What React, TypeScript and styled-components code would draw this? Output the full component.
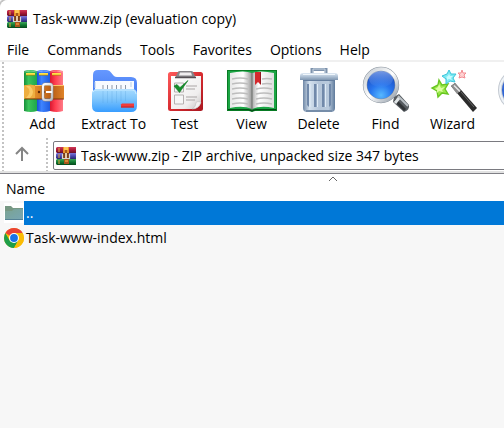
import React from "react";
import styled, { createGlobalStyle } from "styled-components";

const GlobalStyle = createGlobalStyle`
  * { box-sizing: border-box; }
  body {
    margin: 0;
    background: #f7f7f7;
    color: #000;
    font-family: "Open Sans", "Noto Sans", sans-serif;
    font-size: 14px;
    line-height: 20px;
  }
  button, input { font: inherit; color: inherit; }
`;

const Window = styled.div`
  min-height: 100vh;
  overflow: hidden;
  border-top-left-radius: 8px;
  box-shadow: 0 0 0 2px #c4c4c4;
  background: #f7f7f7;
`;

const TitleBar = styled.header`
  display: flex;
  align-items: center;
  gap: 6px;
  height: 38px;
  padding-left: 7px;
  background: #fff;
`;

const Title = styled.h1`
  margin: 0;
  font-size: 14px;
  font-weight: 400;
  white-space: nowrap;
`;

const MenuBar = styled.nav`
  display: flex;
  gap: 18px;
  height: 24px;
  padding: 2px 7px 0;
  background: #fff;
  border-bottom: 2px solid #f0f0f0;
`;

const MenuButton = styled.button`
  padding: 0;
  border: 0;
  background: none;
`;

const Grip = styled.div`
  flex: none;
  width: 2px;
  background: repeating-linear-gradient(#c3c3c3 0 2px, transparent 2px 4px);
`;

const ToolBar = styled.div`
  display: flex;
  height: 76px;
  padding-left: 2px;
  background: #fff;
  overflow: hidden;
`;

const Tools = styled.div`
  display: flex;
  padding-left: 5px;
`;

const ToolButton = styled.button`
  flex: none;
  display: flex;
  flex-direction: column;
  align-items: center;
  min-width: 67px;
  padding: 4px 5px 0;
  border: 0;
  background: none;
  white-space: nowrap;
`;

const ToolIcon = styled.svg`
  flex: none;
  width: 52px;
  height: 48px;
`;

const AddressBar = styled.div`
  display: flex;
  height: 35px;
  padding-left: 2px;
  background: #fff;
  border-bottom: 2px solid #e2e2e2;
`;

const UpButton = styled.button`
  flex: none;
  display: flex;
  align-items: center;
  justify-content: center;
  width: 36px;
  margin-right: 6px;
  padding: 0 0 2px;
  border: 0;
  background: none;
`;

const AddressBox = styled.label`
  flex: 1;
  display: flex;
  align-items: center;
  gap: 5px;
  height: 29px;
  margin: 3px -2px 0 5px;
  padding-left: 2px;
  border: 1px solid #7a7a80;
  border-radius: 2px;
`;

const AddressInput = styled.input`
  flex: 1;
  min-width: 0;
  height: 24px;
  padding: 0;
  border: 0;
  outline: 0;
  background: none;
`;

const FileTable = styled.table`
  width: 666px;
  min-width: 100%;
  table-layout: fixed;
  border-collapse: collapse;
  border-top: 1px solid #7f7f85;
`;

const NameHeader = styled.th`
  position: relative;
  height: 27px;
  padding: 3px 6px 0;
  background: #fff;
  font-weight: 400;
  text-align: left;
`;

const SortMark = styled.svg`
  position: absolute;
  top: 2px;
  left: 50%;
  width: 10px;
  height: 6px;
  margin-left: -5px;
`;

const FileCell = styled.td`
  height: 25px;
  padding: 0;
  vertical-align: top;
`;

const FileEntry = styled.div`
  display: flex;
  align-items: center;
  height: 24px;
  padding-left: 4px;
`;

const FileName = styled.span<{ $selected?: boolean }>`
  flex: 1;
  padding-left: 2px;
  line-height: 24px;
  background: ${(p) => (p.$selected ? "#0078d7" : "transparent")};
  color: ${(p) => (p.$selected ? "#fff" : "#000")};
`;

const SmallIcon = styled.svg`
  flex: none;
  width: 20px;
  height: 20px;
`;

const FolderTile = styled(SmallIcon)`
  background: #fff;
`;

function ArchiveIcon() {
  return (
    <SmallIcon viewBox="0 0 20 20" aria-hidden="true">
      <defs>
        <linearGradient id="arcR" x2="0" y2="1"><stop stopColor="#d03a58" /><stop offset=".5" stopColor="#a81838" /><stop offset="1" stopColor="#641028" /></linearGradient>
        <linearGradient id="arcB" x2="0" y2="1"><stop stopColor="#8078d8" /><stop offset=".5" stopColor="#4a48b0" /><stop offset="1" stopColor="#28286c" /></linearGradient>
        <linearGradient id="arcG" x2="0" y2="1"><stop stopColor="#3fa65a" /><stop offset=".5" stopColor="#117a32" /><stop offset="1" stopColor="#07481d" /></linearGradient>
      </defs>
      <path d="M1 1h19v6H1L0 6V2z" fill="url(#arcR)" />
      <path d="M1 7h19v6H1l-1-1V8z" fill="url(#arcB)" />
      <path d="M1 13h19v6H1l-1-1v-4z" fill="url(#arcG)" />
      <path d="M3 2v4M3 8v4M3 14v4" stroke="#e5a83c" />
      <path d="M7 1h6v6H7z" fill="#e8932c" />
      <path d="M8 1h4v3H8z" fill="#ffc552" />
      <path d="M9 4h2v3H9z" fill="#a85a18" />
      <path d="M7 7h6v6H7z" fill="#7c3d1a" />
      <path d="M6.5 8v4.5h7V8" fill="none" stroke="#d8d4d2" strokeWidth="1.2" />
      <path d="M10 7v5" stroke="#fff0c8" strokeWidth="1.6" />
      <path d="M8 13h5v5H8z" fill="#a9561d" />
      <path d="M9 14h3v2H9z" fill="#d98a34" />
    </SmallIcon>
  );
}

function AddIcon() {
  return (
    <ToolIcon viewBox="0 0 52 48" aria-hidden="true">
      <defs>
        <linearGradient id="addG"><stop stopColor="#168f3a" /><stop offset=".35" stopColor="#3bc45b" /><stop offset="1" stopColor="#1fa64b" /></linearGradient>
        <linearGradient id="addB"><stop stopColor="#174fd7" /><stop offset=".35" stopColor="#3e84ff" /><stop offset="1" stopColor="#205ce0" /></linearGradient>
        <linearGradient id="addR"><stop stopColor="#d91730" /><stop offset=".4" stopColor="#ff3d50" /><stop offset="1" stopColor="#ff7b87" /></linearGradient>
        <linearGradient id="addS"><stop stopColor="#f2a633" /><stop offset=".3" stopColor="#e08a28" /><stop offset=".7" stopColor="#b85c14" /><stop offset="1" stopColor="#df8429" /></linearGradient>
        <linearGradient id="addM" x2="1" y2="1"><stop stopColor="#fff" /><stop offset="1" stopColor="#b8b8bc" /></linearGradient>
      </defs>
      <path d="M7 5q6-2 13 0v40q-6 2-13 0z" fill="url(#addG)" />
      <path d="M20 5q6-2 13 0v40q-6 2-13 0z" fill="url(#addB)" />
      <path d="M33 5q6-2 13 0v40q-6 2-13 0z" fill="url(#addR)" />
      <path d="M7 6q6-2 13 0m0 0q6-2 13 0m0 0q6-2 13 0" fill="none" stroke="#fff" strokeOpacity=".35" />
      <path d="M9 8.3h9M22 8.3h9M35 8.3h9" stroke="#b48100" strokeWidth="2.6" />
      <path d="M9 7.8h9M22 7.8h9M35 7.8h9" stroke="#ffe24a" strokeWidth="1.7" />
      <rect x="7" y="19" width="40" height="14" rx="1" fill="url(#addS)" />
      <path d="M7 20q7-3 11 0v12q-6 2-11 0z" fill="#eeae40" />
      <path d="M9 20q7 5 0 12h4q6-6 0-12z" fill="#ffd677" opacity=".7" />
      <path d="M18 19.5h29" stroke="#ffc46a" />
      <path d="M8 33h39" stroke="#783508" />
      <circle cx="22" cy="26" r="1.2" fill="#5b2507" /><circle cx="27" cy="26" r="1" fill="#5b2507" />
      <rect x="26" y="18" width="9" height="16" rx="2.5" fill="none" stroke="#8a8a8e" strokeWidth="2.8" />
      <rect x="26" y="18" width="9" height="16" rx="2.5" fill="none" stroke="url(#addM)" strokeWidth="2" />
      <path d="M29 26h6" stroke="#fff" strokeWidth="2" />
    </ToolIcon>
  );
}

function ExtractIcon() {
  return (
    <ToolIcon viewBox="0 0 52 48" aria-hidden="true">
      <defs>
        <linearGradient id="exBack" x2="0" y2="1"><stop stopColor="#6698ff" /><stop offset="1" stopColor="#3770ed" /></linearGradient>
        <linearGradient id="exFront" x2="0" y2="1"><stop stopColor="#a6dbff" /><stop offset=".4" stopColor="#83c8fc" /><stop offset="1" stopColor="#379dff" /></linearGradient>
      </defs>
      <path d="M5 39V9q0-5 5-5h8c6 0 6 7 11 7h14q6 0 6 6v22z" fill="url(#exBack)" />
      <path d="M7 15h39v18H7z" fill="#f8fbff" />
      <path d="M43 16v5M7 16v6" stroke="#b7cce8" />
      <path d="M15 19v5M19.5 19v5M24 19v5M28.5 19v5M33 19v5M37.5 19v5" stroke="#8e99a8" />
      <path d="M4 28q0-5 5-5h35q5 0 5 5v12q0 6-6 6H10q-6 0-6-6z" fill="url(#exFront)" />
      <path d="M15 25v12M19.5 25v12M24 25v12M28.5 25v12M33 25v10M37.5 25v10" stroke="#4f9ad8" strokeOpacity=".25" />
      <path d="M5 26q1-2 4-2h35q4 0 4 4" fill="none" stroke="#c6e9ff" />
      <path d="M34 37.5h12v4H33v-3z" fill="#f23c3a" /><path d="M33 41h13" stroke="#ae2836" />
    </ToolIcon>
  );
}

function TestIcon() {
  return (
    <ToolIcon viewBox="0 0 52 48" aria-hidden="true">
      <defs>
        <linearGradient id="tsR" x2="1" y2="1"><stop stopColor="#ff5c5c" /><stop offset=".5" stopColor="#d82c30" /><stop offset="1" stopColor="#a81720" /></linearGradient>
        <linearGradient id="tsP" x2="1" y2="1"><stop stopColor="#fff" /><stop offset=".7" stopColor="#f0eeee" /><stop offset="1" stopColor="#c4c0c0" /></linearGradient>
      </defs>
      <rect x="9" y="6" width="35" height="39" rx="2.5" fill="url(#tsR)" />
      <path d="M12 10h30v27q-2 6-9 6H12z" fill="url(#tsP)" />
      <path d="M42 36q-5-1-5 1 0 4-4 6 7 0 9-7z" fill="#f4f2f2" stroke="#bbb" strokeWidth=".5" />
      <path d="M19 6q0-1 2-1h11q2 0 2 1l3 6H16z" fill="#878488" /><path d="M21 6.5h11l1 3H20z" fill="#f1eef0" /><path d="M16 11.5h21" stroke="#554f54" strokeWidth="1.5" />
      <path d="M15.500 17h9v9h-9zM15.500 29h9v9h-9z" fill="#f7f7f7" stroke="#b6b0b0" />
      <path d="M27 20h11M27 23h9M27 31h11M27 34h9" stroke="#aaa5a5" />
      <path d="M15 20l3-1.500 3 3 8-7-8.500 12z" fill="#178d2b" stroke="#0b7a20" strokeWidth=".6" />
    </ToolIcon>
  );
}

function ViewIcon() {
  return (
    <ToolIcon viewBox="0 0 52 48" aria-hidden="true">
      <defs>
        <linearGradient id="vwL"><stop stopColor="#e6e6e6" /><stop offset=".6" stopColor="#fff" /><stop offset="1" stopColor="#999" /></linearGradient>
        <linearGradient id="vwR"><stop stopColor="#aaa" /><stop offset=".3" stopColor="#fff" /><stop offset="1" stopColor="#dedede" /></linearGradient>
      </defs>
      <path d="M1 4h50v41H29l-3 1-3-1H1z" fill="#087b24" /><path d="M2 5h48v38H2z" fill="#1ba544" />
      <path d="M4 7q14-3 22 0v36q-9-4-22-1z" fill="url(#vwL)" />
      <path d="M26 7q8-3 22 0v35q-13-3-22 1z" fill="url(#vwR)" />
      <path d="M26 7v37" stroke="#6d706d" />
      <path d="M6 13q8-2 16 0M6 18q8-2 16 0M6 23q8-2 16 0M6 28q8-2 16 0M6 33q8-2 16 0M6 38q8-2 16 0M36 13q5-1 10 0M36 18q5-1 10 0M30 23q8-2 16 0M30 28q8-2 16 0M30 33q8-2 16 0M30 38q8-2 16 0" fill="none" stroke="#bdbdbd" strokeWidth="1.3" />
      <path d="M29 6h6v13l-3-3-3 3z" fill="#d4292d" /><path d="M34.500 6v12" stroke="#921922" />
      <path d="M2 43.500h20l4 1.500 4-1.500h20" stroke="#034b14" fill="none" />
    </ToolIcon>
  );
}

function DeleteIcon() {
  return (
    <ToolIcon viewBox="0 0 52 48" aria-hidden="true">
      <defs>
        <linearGradient id="dlB"><stop stopColor="#7088a6" /><stop offset=".2" stopColor="#d4e1ee" /><stop offset=".5" stopColor="#b4c5d9" /><stop offset=".8" stopColor="#b9cadd" /><stop offset="1" stopColor="#5f7a9b" /></linearGradient>
        <linearGradient id="dlL" x2="0" y2="1"><stop stopColor="#dfe9f3" /><stop offset=".5" stopColor="#b0c2d5" /><stop offset="1" stopColor="#7e95b0" /></linearGradient>
      </defs>
      <path d="M19 8V3.500h14V8" fill="none" stroke="#7d92ac" strokeWidth="3" /><path d="M20 7V3h12v4" fill="none" stroke="#c9d5e1" />
      <path d="M10 13h32v29q0 4-4 4H14q-4 0-4-4z" fill="url(#dlB)" />
      <path d="M14 18v21l2 2V18zM21 18v23h2.500V18zM29 18v23h2.500V18zM36 18v23l2-2V18z" fill="#7189aa" />
      <path d="M17 18v23M24.500 18v23M32.500 18v23" stroke="#dfebf6" />
      <path d="M10 7h32q3 0 3 3v4H7v-4q0-3 3-3z" fill="url(#dlL)" /><path d="M10 8.500h32" stroke="#f0f6fb" /><path d="M10 14.500h32" stroke="#667f9f" />
      <path d="M13 45h26" stroke="#768da9" strokeWidth="2" />
    </ToolIcon>
  );
}

function FindIcon() {
  return (
    <ToolIcon viewBox="0 0 52 48" aria-hidden="true">
      <defs>
        <radialGradient id="fnLens" cx=".5" cy=".82" r=".85"><stop stopColor="#56b8ff" /><stop offset=".4" stopColor="#2876ee" /><stop offset="1" stopColor="#173cae" /></radialGradient>
        <linearGradient id="fnRing" x2="1" y2="1"><stop stopColor="#c4cbd1" /><stop offset=".5" stopColor="#fff" /><stop offset="1" stopColor="#8e99a5" /></linearGradient>
        <linearGradient id="fnShine" x2="0" y2="1"><stop stopColor="#b5d1ff" stopOpacity=".6" /><stop offset="1" stopColor="#6397ef" stopOpacity=".1" /></linearGradient>
      </defs>
      <path d="M34 31l5-3 10 11q1 5-5 7L33 36z" fill="#575c61" /><path d="M38 30l10 10" stroke="#bbc1c6" strokeWidth="2" /><path d="M35 34l10 10" stroke="#303336" strokeWidth="3" /><path d="M35 37l4-5" stroke="#e2e6e8" strokeWidth="3" />
      <circle cx="21" cy="19" r="16" fill="url(#fnLens)" stroke="#87919c" strokeWidth="4.400" /><circle cx="21" cy="19" r="16" fill="none" stroke="url(#fnRing)" strokeWidth="3.400" />
      <ellipse cx="21" cy="13" rx="12" ry="8" fill="url(#fnShine)" />
    </ToolIcon>
  );
}

function WizardIcon() {
  return (
    <ToolIcon viewBox="0 0 52 48" aria-hidden="true">
      <path d="M24 20l4-3 22 25-4 4z" fill="#2b2b2b" />
      <path d="M24 20l4-3 6 7-4 4z" fill="#8e8e8e" />
      <path d="M27 19.500l6 6" stroke="#e8e8e8" strokeWidth="1.500" />
      <path d="M34 26l13 15" stroke="#666" />
      <path d="M12 14l3 5 6-1-3 5 3 5-6-1-4 4-1-6-5-3 6-3z" fill="#9be84c" stroke="#68c620" strokeWidth="1.400" /><path d="M12 18l2 4 4-1-3 3 1 2-4-1-2 2v-3l-2-1 3-2z" fill="#dcffa0" />
      <path d="M22 4l2 4 5 0-3 4 2 4-5-1-4 3v-5l-4-3 5-2z" fill="#7ceaf2" stroke="#3cc4dc" /><path d="M22 8l1 2 3 0-2 2 1 2-3-1-2 1v-2l-1-1 2-1z" fill="#c8fbff" />
      <path d="M35 4l1 3 3 0-2 2 1 3-3-1-3 1 1-3-2-2 3 0z" fill="#ffd2d2" stroke="#f28c92" />
    </ToolIcon>
  );
}

function InfoIcon() {
  return (
    <ToolIcon viewBox="0 0 52 48" aria-hidden="true">
      <defs><linearGradient id="inB" x2="0" y2="1"><stop stopColor="#4269c7" /><stop offset="1" stopColor="#1f62e2" /></linearGradient></defs>
      <circle cx="26" cy="24" r="20" fill="url(#inB)" stroke="#c3c9d1" strokeWidth="4" />
      <circle cx="26" cy="24" r="20" fill="none" stroke="#edf2f7" strokeWidth="2" />
      <path d="M26 21v13M26 14v3" stroke="#fff" strokeWidth="5" />
    </ToolIcon>
  );
}

function FolderIcon() {
  return (
    <FolderTile viewBox="0 0 20 20" aria-hidden="true">
      <defs><linearGradient id="fd" x2="1" y2="1"><stop stopColor="#7aa392" /><stop offset="1" stopColor="#78a6b5" /></linearGradient></defs>
      <path d="M1 3h6l2 2h10v12H1z" fill="#779884" />
      <path d="M1 8h7l2-2h9v11H1z" fill="url(#fd)" />
      <path d="M1 16.500h18" stroke="#568295" />
    </FolderTile>
  );
}

function ChromeIcon() {
  return (
    <SmallIcon viewBox="0 0 20 20" aria-hidden="true">
      <circle cx="10" cy="10" r="10" fill="#fbbc04" />
      <path d="M10 10L1.340 5A10 10 0 0 1 18.660 5z" fill="#ea4335" />
      <path d="M1.340 5A10 10 0 0 0 10 20l4.330-7.500L10 10 5.670 12.500z" fill="#1e9e49" />
      <path d="M10 5h8.660A10 10 0 0 1 10 20l4.330-7.500z" fill="#fbbc04" />
      <circle cx="10" cy="10" r="5" fill="#fff" /><circle cx="10" cy="10" r="3.900" fill="#1a73e8" />
    </SmallIcon>
  );
}

const menus = ["File", "Commands", "Tools", "Favorites", "Options", "Help"];
const tools = [
  { label: "Add", Icon: AddIcon },
  { label: "Extract To", Icon: ExtractIcon },
  { label: "Test", Icon: TestIcon },
  { label: "View", Icon: ViewIcon },
  { label: "Delete", Icon: DeleteIcon },
  { label: "Find", Icon: FindIcon },
  { label: "Wizard", Icon: WizardIcon },
  { label: "Info", Icon: InfoIcon },
];
const files = [
  { name: "..", Icon: FolderIcon, selected: true },
  { name: "Task-www-index.html", Icon: ChromeIcon, selected: false },
];

export default function App() {
  return (
    <>
      <GlobalStyle />
      <Window>
        <TitleBar>
          <ArchiveIcon />
          <Title>Task-www.zip (evaluation copy)</Title>
        </TitleBar>
        <MenuBar>
          {menus.map((m) => <MenuButton key={m}>{m}</MenuButton>)}
        </MenuBar>
        <ToolBar>
          <Grip />
          <Tools>
            {tools.map(({ label, Icon }) => (
              <ToolButton key={label}><Icon />{label}</ToolButton>
            ))}
          </Tools>
        </ToolBar>
        <AddressBar>
          <Grip />
          <UpButton aria-label="Up one level">
            <svg width="16" height="16" viewBox="0 0 16 16" fill="none" stroke="#858585" strokeWidth="2">
              <path d="M8 15V2M2 8l6-6 6 6" />
            </svg>
          </UpButton>
          <Grip />
          <AddressBox>
            <ArchiveIcon />
            <AddressInput aria-label="Address" readOnly value="Task-www.zip - ZIP archive, unpacked size 347 bytes" />
          </AddressBox>
        </AddressBar>
        <FileTable>
          <thead>
            <tr>
              <NameHeader scope="col" aria-sort="ascending">
                Name
                <SortMark viewBox="0 0 10 6" fill="none" stroke="#666"><path d="M1 5l4-4 4 4" /></SortMark>
              </NameHeader>
            </tr>
          </thead>
          <tbody>
            {files.map(({ name, Icon, selected }) => (
              <tr key={name} aria-selected={selected}>
                <FileCell>
                  <FileEntry><Icon /><FileName $selected={selected}>{name}</FileName></FileEntry>
                </FileCell>
              </tr>
            ))}
          </tbody>
        </FileTable>
      </Window>
    </>
  );
}
